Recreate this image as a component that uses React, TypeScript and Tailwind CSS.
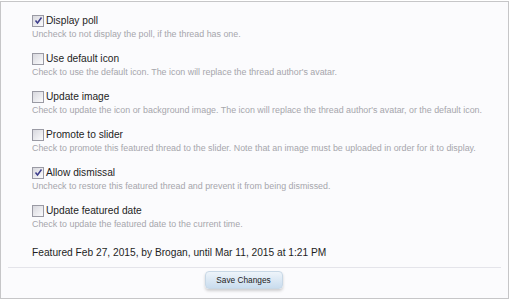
import React from "react";

interface Option {
  label: string;
  hint: string;
  checked: boolean;
}

const options: Option[] = [
  { label: "Display poll", hint: "Uncheck to not display the poll, if the thread has one.", checked: true },
  { label: "Use default icon", hint: "Check to use the default icon. The icon will replace the thread author's avatar.", checked: false },
  {
    label: "Update image",
    hint: "Check to update the icon or background image. The icon will replace the thread author's avatar, or the default icon.",
    checked: false,
  },
  {
    label: "Promote to slider",
    hint: "Check to promote this featured thread to the slider. Note that an image must be uploaded in order for it to display.",
    checked: false,
  },
  { label: "Allow dismissal", hint: "Uncheck to restore this featured thread and prevent it from being dismissed.", checked: true },
  { label: "Update featured date", hint: "Check to update the featured date to the current time.", checked: false },
];

function CheckBox({ checked }: { checked: boolean }) {
  return (
    <span className="w-[12px] h-[12px] border border-[#9a9aa4] bg-gradient-to-br from-[#d8d8de] to-[#fbfbfd] flex items-center justify-center shrink-0">
      {checked && (
        <svg width="9" height="9" viewBox="0 0 9 9">
          <path d="M1.5 4.5 L3.5 7 L7.5 1.5" fill="none" stroke="#3d3d8c" strokeWidth="1.5" />
        </svg>
      )}
    </span>
  );
}

export default function App() {
  return (
    <div className="w-[511px] h-[300px] bg-white font-['Liberation_Sans',Arial,sans-serif]">
      <div className="mt-[1px] w-[509px] h-[298px] border border-[#c6c6c8] bg-[#fbfbfd] flex flex-col">
        {/* Options */}
        <div className="pl-[31px] pt-[11px]">
          {options.map((o) => (
            <div key={o.label} className="h-[38px]">
              <label className="flex items-center gap-[2px] h-[15px]">
                <CheckBox checked={o.checked} />
                <span className="text-[10.2px] text-[#1e1e1e]">{o.label}</span>
              </label>
              <p className="text-[8.9px] leading-[12px] text-[#a6a6ac]">{o.hint}</p>
            </div>
          ))}
        </div>

        <p className="pl-[31px] mt-[5px] text-[10.2px] text-[#1e1e1e] leading-[14px]">
          Featured Feb 27, 2015, by Brogan, until Mar 11, 2015 at 1:21 PM
        </p>

        {/* Footer */}
        <div className="mt-[7px] mx-[7px] border-t border-[#e4e4ea] flex justify-center pt-[3px] pr-[22px]">
          <button className="w-[78px] h-[18px] rounded-[4px] border border-[#c8d8e6] bg-gradient-to-b from-[#eef4fa] to-[#c9dcee] shadow-[0_2px_3px_rgba(0,0,0,0.18)] text-[8.3px] text-[#222]">
            Save Changes
          </button>
        </div>
      </div>
    </div>
  );
}
